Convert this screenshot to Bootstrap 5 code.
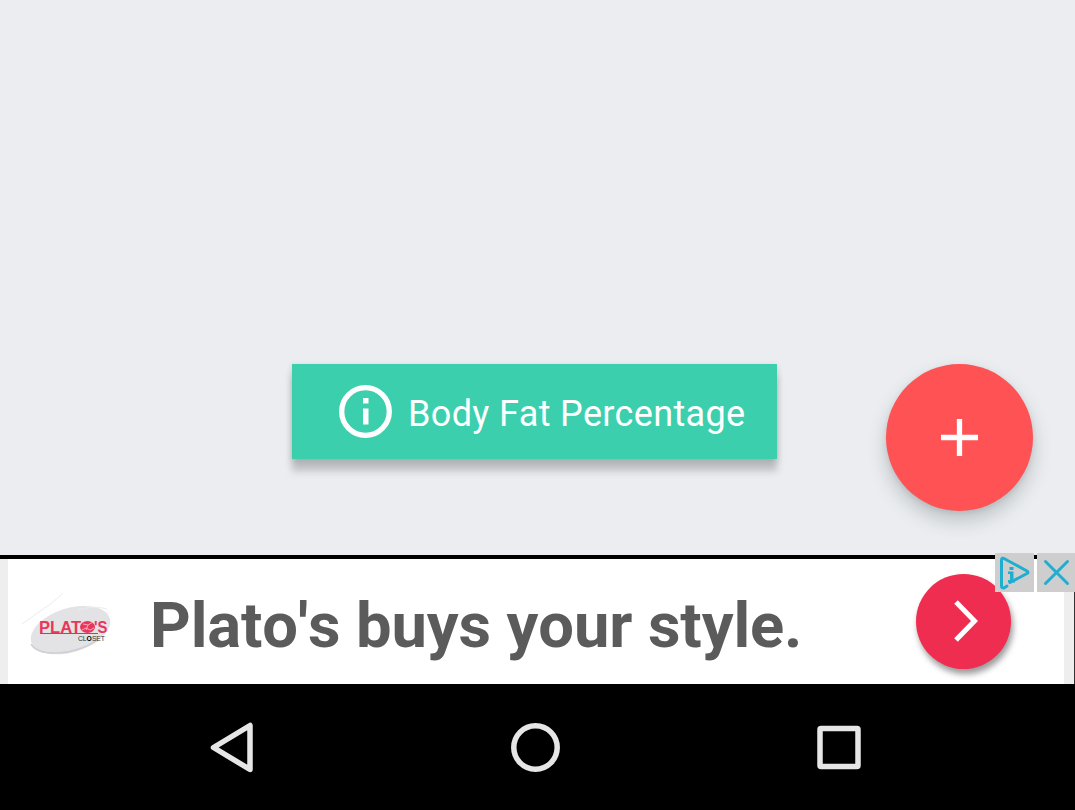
<!DOCTYPE html>
<html lang="en">
<head>
<meta charset="utf-8">
<meta name="viewport" content="width=device-width, initial-scale=1">
<title>Body Fat Percentage</title>
<link href="https://cdn.jsdelivr.net/npm/bootstrap@5.3.0/dist/css/bootstrap.min.css" rel="stylesheet">
<style>
body{font-family:Roboto,"Liberation Sans",sans-serif;background:#ebedf0;height:810px;overflow:hidden}
.stage{height:555px;padding:364px 42px 0 292px}
.chip{width:485px;height:95px;padding-left:47px;gap:16px;border:0;border-radius:0;background:#3bcfae;color:#fff;font-size:36px;line-height:1;box-shadow:0 12px 7px 0 rgba(60,65,65,.26),0 2px 6px rgba(60,65,65,.2)}
.chip span{letter-spacing:.36px;padding-top:4px}
.fab{width:147px;height:147px;border:0;background:#ff5254;box-shadow:0 10px 18px rgba(60,70,70,.25),0 2px 5px rgba(60,70,70,.12)}
.ad{height:129px;border-top:4px solid #000;background:#fff}
.gutter-l{width:8px;background:#eee}
.gutter-r{width:11px;background:#eee;border-right:1px solid #333}
.logo{margin-left:12px;margin-top:10px;width:100px}
.logo text{font-family:"Liberation Sans",Arial,sans-serif}
.headline{margin-left:30px;padding-top:8px;font-size:63.3px;line-height:1;color:#5b5b5b;white-space:nowrap;font-kerning:none;letter-spacing:-.12px}
.go{width:95px;height:95px;margin-right:53px;background:#ef2d50;box-shadow:2px 5px 6px rgba(0,0,0,.4)}
.choices{top:-6px;right:0;gap:3px}
.choices span{background:#cecece;height:39px}
.navkeys{height:126px;background:#000}
svg{display:block}
</style>
</head>
<body class="d-flex flex-column">
<main class="stage d-flex justify-content-between align-items-start flex-shrink-0">
  <button class="chip d-flex align-items-center">
    <svg width="53" height="53" viewBox="0 0 53 53"><circle cx="26.5" cy="26.5" r="23.8" fill="none" stroke="#fff" stroke-width="5.3"/><path d="M24 13h5.5v5.5H24zM24 23.5h5.5V39.500H24z" fill="#fff"/></svg>
    <span>Body Fat Percentage</span>
  </button>
  <button class="fab rounded-circle d-flex align-items-center justify-content-center p-0" aria-label="Add">
    <svg width="38" height="38" viewBox="0 0 38 38"><path d="M18.500 0v37M0 18.500h37" stroke="#fff" stroke-width="5.300"/></svg>
  </button>
</main>
<section class="ad position-relative d-flex flex-shrink-0">
  <div class="gutter-l"></div>
  <div class="d-flex align-items-center flex-grow-1">
    <svg class="logo" height="70" viewBox="0 0 100 70">
      <ellipse cx="50.500" cy="38" rx="41" ry="22" transform="rotate(-17 51 38)" fill="#e3e3e6"/>
      <path d="M11 52Q17 62 38 61T78 48" fill="none" stroke="#d0d0d4" stroke-width="1.500"/>
      <path d="M2 32Q12 25 29 13Q38 6 43 1M58 18Q75 13 87 17" fill="none" stroke="#ececef"/>
      <path d="M20 41.500h58" stroke="#8c5962" stroke-width="1"/>
      <text x="19" y="40.500" font-weight="700" font-size="16.500" fill="#e9375c" textLength="42" lengthAdjust="spacingAndGlyphs">PLAT</text>
      <ellipse cx="67.500" cy="35" rx="7.500" ry="6" fill="#e9375c"/>
      <path d="M62 38l4-2 4 2 4-2M63 32l5 1 5-3M68 33l-2 5" fill="none" stroke="#f6b4c0" stroke-width=".9"/>
      <text x="74" y="40.500" font-weight="700" font-size="16.500" fill="#e9375c" textLength="13.500" lengthAdjust="spacingAndGlyphs">'S</text>
      <text x="58" y="48.500" font-size="7" fill="#333" textLength="27" lengthAdjust="spacingAndGlyphs">CL<tspan font-weight="700" fill="#000">O</tspan>SET</text>
    </svg>
    <div class="headline fw-bold">Plato's buys your style.</div>
    <div class="go rounded-circle ms-auto d-flex align-items-center justify-content-center flex-shrink-0">
      <svg width="30" height="44" viewBox="0 0 30 44"><path d="M7 2L25.500 21L7 40" fill="none" stroke="#fff" stroke-width="5"/></svg>
    </div>
  </div>
  <div class="gutter-r"></div>
  <div class="choices position-absolute d-flex">
    <span><svg width="39" height="39" viewBox="0 0 39 39"><path d="M12 33l-3 2Q6.500 35 6.500 33V7Q6.500 4.500 9 5.500L32 18Q34 19.500 32 20.500L15 29.500" fill="none" stroke="#20aed0" stroke-width="3" stroke-linecap="round" stroke-linejoin="round"/><path d="M14.500 14h4v3h-4zM13 18.500h5.500V27H20v2.500h-7V27h2v-6h-2z" fill="#20aed0"/></svg></span>
    <span><svg width="38" height="39" viewBox="0 0 38 39"><path d="M8.500 8.500l22 22M30.500 8.500l-22 22" stroke="#20aed0" stroke-width="3" stroke-linecap="round"/></svg></span>
  </div>
</section>
<nav class="navkeys flex-shrink-0">
  <svg width="1075" height="126" viewBox="0 0 1075 126" fill="none" stroke="#e6e6e6" stroke-width="5.500" stroke-linejoin="round"><path d="M213.500 63.500L250 41.500V85.500Z"/><circle cx="535.500" cy="63.500" r="21.700"/><rect x="820" y="44.500" width="38" height="38" rx="1"/></svg>
</nav>
<script src="https://cdn.jsdelivr.net/npm/bootstrap@5.3.0/dist/js/bootstrap.bundle.min.js"></script>
</body>
</html>
